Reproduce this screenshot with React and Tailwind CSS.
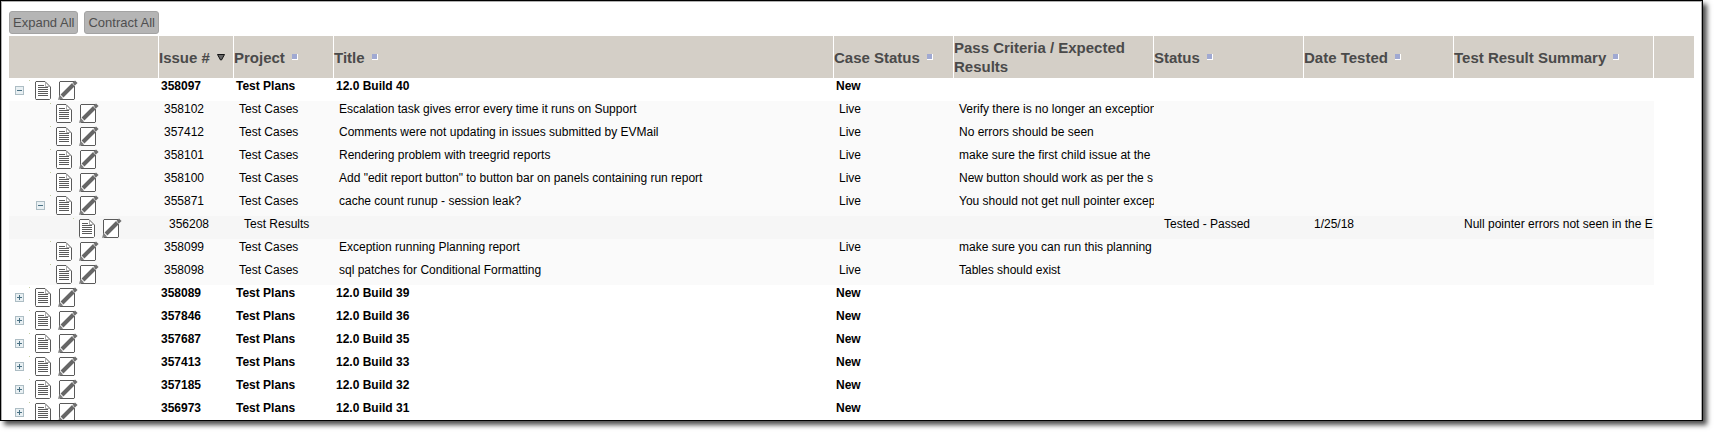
import React, { useState } from 'react';

const columns = [
  { key: 'issue', label: 'Issue #', sorted: true, width: 'w-[75px]' },
  { key: 'project', label: 'Project', width: 'w-[100px]' },
  { key: 'title', label: 'Title', width: 'w-[500px]' },
  { key: 'caseStatus', label: 'Case Status', width: 'w-[120px]' },
  { key: 'criteria', label: 'Pass Criteria / Expected Results', plain: true, width: 'w-[200px]' },
  { key: 'status', label: 'Status', width: 'w-[150px]' },
  { key: 'tested', label: 'Date Tested', width: 'w-[150px]' },
  { key: 'summary', label: 'Test Result Summary', width: 'w-[200px]' },
];

const plan = (issue, title, children = []) => ({ issue, project: 'Test Plans', title, caseStatus: 'New', children });
const testCase = (issue, title, criteria, children = []) => ({
  issue, project: 'Test Cases', title, caseStatus: 'Live', criteria, children,
});

const plans = [
  plan('358097', '12.0 Build 40', [
    testCase('358102', 'Escalation task gives error every time it runs on Support', 'Verify there is no longer an exception'),
    testCase('357412', 'Comments were not updating in issues submitted by EVMail', 'No errors should be seen'),
    testCase('358101', 'Rendering problem with treegrid reports', 'make sure the first child issue at the'),
    testCase('358100', 'Add "edit report button" to button bar on panels containing run report', 'New button should work as per the s'),
    testCase('355871', 'cache count runup - session leak?', 'You should not get null pointer excep', [
      {
        issue: '356208', project: 'Test Results', status: 'Tested - Passed', tested: '1/25/18',
        summary: 'Null pointer errors not seen in the E', children: [],
      },
    ]),
    testCase('358099', 'Exception running Planning report', 'make sure you can run this planning'),
    testCase('358098', 'sql patches for Conditional Formatting', 'Tables should exist'),
  ]),
  plan('358089', '12.0 Build 39'),
  plan('357846', '12.0 Build 36'),
  plan('357687', '12.0 Build 35'),
  plan('357413', '12.0 Build 33'),
  plan('357185', '12.0 Build 32'),
  plan('356973', '12.0 Build 31'),
];

const levels = [
  { row: 'bg-white font-bold', tree: 'pl-[6px]', cell: 'pl-[2px]' },
  { row: 'bg-[#fafafa]', tree: 'pl-[27px]', cell: 'pl-[5px]' },
  { row: 'bg-[#f6f6f6]', tree: 'pl-[50px]', cell: 'pl-[10px]' },
];

const ToggleIcon = ({ open }) => (
  <svg width="9" height="9" viewBox="0 0 9 9" shapeRendering="crispEdges">
    <rect x="0.5" y="0.5" width="8" height="8" fill="#e9f0f3" stroke="#adbdc4" />
    <path d="M2 4.5h5" stroke="#4a7184" />
    {!open && <path d="M4.5 2v5" stroke="#4a7184" />}
  </svg>
);

const DocIcon = () => (
  <svg width="16" height="20" viewBox="0 0 16 20" fill="none" stroke="#5a5a5a">
    <path d="M1 1.500h9L15.500 7v11.500l-1 1H1l-.5-1V2z" fill="#fff" />
    <path d="M10.500 2v4.500h4.500" stroke="#999" strokeWidth="0.8" />
    <path d="M3 5.500h6M3 7.500h10M3 9.500h10M3 11.500h10M3 13.500h10M3 15.500h10" shapeRendering="crispEdges" />
  </svg>
);

const EditIcon = () => (
  <svg width="20" height="20" viewBox="0 0 20 20" fill="none">
    <path d="M2 1.500h14l.5.5v17l-.5.500H2l-.5-.5V2z" fill="#fff" stroke="#5a5a5a" />
    <path d="M4 16L15.500 4.500" stroke="#666" strokeWidth="4" />
    <path d="M15.200 4.800L15.900 4.100" stroke="#b5b5b5" strokeWidth="4" />
    <path d="M15.900 4.100L18.300 1.700" stroke="#6e6e6e" strokeWidth="3.600" />
    <path d="M0 20l1.500-5.200 3.700 3.700z" fill="#808080" />
  </svg>
);

const SortMark = ({ sorted }) =>
  sorted ? (
    <svg className="shrink-0" width="8" height="8" viewBox="0 0 8 8">
      <path d="M0.500 1.500h7L4.500 7h-1z" fill="#666" stroke="#111" />
    </svg>
  ) : (
    <span className="size-[6px] shrink-0 border-r border-b border-white bg-[#a0a9d2]" />
  );

const Row = ({ item, level, open, onToggle }) => {
  const style = levels[level];
  const expandable = level === 0 || item.children.length > 0;

  return (
    <tr>
      <td className={`h-[23px] p-0 ${style.row}`}>
        <div className={`flex items-center ${style.tree}`}>
          <span className="flex w-[9px] pt-[2px]">
            {expandable && (
              <button type="button" aria-label={open ? 'Collapse' : 'Expand'} onClick={() => onToggle(item.issue)}>
                <ToggleIcon open={open} />
              </button>
            )}
          </span>
          <span className="mx-[5px] size-px self-start bg-[#c5cfa0]" />
          <a href={`#view-${item.issue}`} aria-label="View" className="mr-[7px]"><DocIcon /></a>
          <a href={`#edit-${item.issue}`} aria-label="Edit"><EditIcon /></a>
        </div>
      </td>
      {columns.map((col) => (
        <td key={col.key} className={`h-[23px] overflow-hidden p-0 align-top whitespace-nowrap ${style.row} ${style.cell}`}>
          {item[col.key]}
        </td>
      ))}
      <td className="bg-white p-0" />
    </tr>
  );
};

const App = () => {
  const [openRows, setOpenRows] = useState(['358097', '355871']);

  const toggle = (issue) => {
    setOpenRows((prev) => (prev.includes(issue) ? prev.filter((i) => i !== issue) : [...prev, issue]));
  };

  const expandAll = () => {
    setOpenRows(plans.flatMap((p) => [p.issue, ...p.children.map((c) => c.issue)]));
  };

  const renderRows = (items, level = 0) =>
    items.flatMap((item) => {
      const open = openRows.includes(item.issue) && item.children.length > 0;
      return [
        <Row key={item.issue} item={item} level={level} open={open} onToggle={toggle} />,
        ...(open ? renderRows(item.children, level + 1) : []),
      ];
    });

  const buttonClass = 'h-[23px] rounded-[3px] border border-[#a3a3a3] bg-[#b5b5b5] px-[3px] text-[13px] text-[#4f4f4f]';

  return (
    <div className="h-screen bg-white pr-[15px] pb-[15px] font-['Liberation_Sans',Arial,sans-serif]">
      <div className="h-full border border-black bg-white shadow-[4px_4px_5px_0px_rgba(0,0,0,0.7)]">
        <div className="h-full overflow-hidden border-t border-r border-l border-[#b0b0b0] px-[7px] pt-[9px]">
          {/* Toolbar */}
          <div className="mb-[2px] flex gap-[6px]">
            <button type="button" className={buttonClass} onClick={expandAll}>Expand All</button>
            <button type="button" className={buttonClass} onClick={() => setOpenRows([])}>Contract All</button>
          </div>

          {/* Issue tree */}
          <table className="w-full table-fixed border-separate border-spacing-0 text-[12px] leading-[16px] text-black">
            <thead>
              <tr className="h-[42px] bg-[#d4cfc7] text-left text-[15px] leading-[19px] text-[#4a4a4a]">
                <td className="w-[150px] border-r border-white p-0" />
                {columns.map((col) => (
                  <th key={col.key} scope="col" className={`border-r border-white p-0 align-middle font-bold ${col.width}`}>
                    <span className="flex items-center gap-[7px]">
                      {col.label}
                      {!col.plain && <SortMark sorted={col.sorted} />}
                    </span>
                  </th>
                ))}
                <td className="p-0" />
              </tr>
            </thead>
            <tbody>{renderRows(plans)}</tbody>
          </table>
        </div>
      </div>
    </div>
  );
};

export default App;
